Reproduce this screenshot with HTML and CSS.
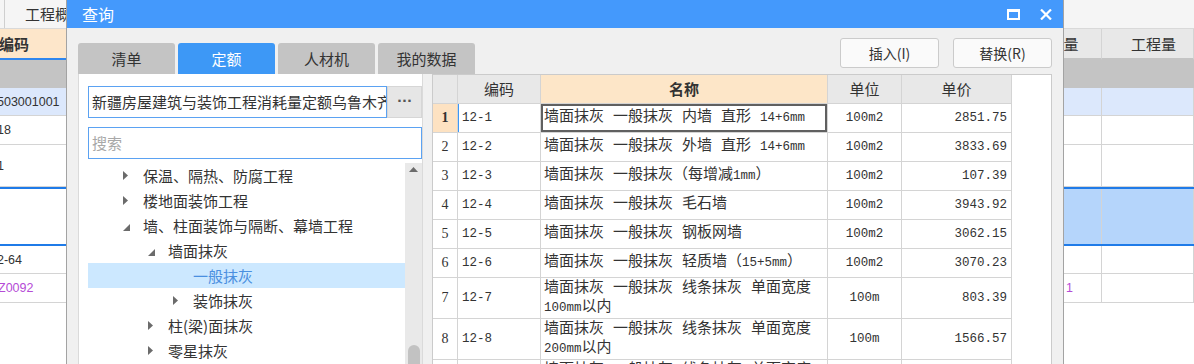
FILE: index.html
```html
<!DOCTYPE html>
<html lang="zh-CN">
<head>
  <meta charset="UTF-8">
  <title>查询</title>
  <link rel="stylesheet" href="styles.css">
</head>
<body>
  <!-- 背景：主界面表格 -->
  <div class="app">
    <div class="app-top"><div class="app-tab">工程概况</div></div>
    <div class="bg-row bg-head">
      <div class="c1 head-code">编码</div><div class="c2"></div><div class="c3">含量</div><div class="c4">工程量</div>
    </div>
    <div class="bg-row bg-gray h28">
      <div class="c1"></div><div class="c2"></div><div class="c3"></div><div class="c4"></div>
    </div>
    <div class="bg-row bg-light h28">
      <div class="c1">503001001</div><div class="c2"></div><div class="c3"></div><div class="c4"></div>
    </div>
    <div class="bg-row h29">
      <div class="c1">18</div><div class="c2"></div><div class="c3"></div><div class="c4"></div>
    </div>
    <div class="bg-row h42">
      <div class="c1">1</div><div class="c2"></div><div class="c3"></div><div class="c4"></div>
    </div>
    <div class="bg-row bg-sel">
      <div class="c1"></div><div class="c2"></div><div class="c3"></div><div class="c4"></div>
    </div>
    <div class="bg-row h28">
      <div class="c1">2-64</div><div class="c2"></div><div class="c3"></div><div class="c4"></div>
    </div>
    <div class="bg-row h29">
      <div class="c1 purple">Z0092</div><div class="c2"></div><div class="c3 purple">1</div><div class="c4"></div>
    </div>
  </div>

  <!-- 查询对话框 -->
  <div class="dialog">
    <div class="dlg-title">
      <span>查询</span>
      <div class="title-btns">
        <svg width="13" height="11" viewBox="0 0 13 11"><rect x="1" y="1.5" width="11" height="8.5" fill="none" stroke="#fff" stroke-width="2"/><rect x="0" y="0" width="13" height="3" fill="#fff"/></svg>
        <svg width="12" height="11" viewBox="0 0 12 11"><path d="M1 0.5 L11 10.5 M11 0.5 L1 10.5" stroke="#fff" stroke-width="2.2"/></svg>
      </div>
    </div>

    <div class="dlg-toolbar">
      <div class="tab">清单</div>
      <div class="tab active">定额</div>
      <div class="tab">人材机</div>
      <div class="tab">我的数据</div>
      <button class="btn first">插入(I)</button>
      <button class="btn">替换(R)</button>
    </div>

    <div class="dlg-body">
      <div class="left-panel">
        <div class="combo">
          <div class="combo-text">新疆房屋建筑与装饰工程消耗量定额乌鲁木齐</div>
          <div class="combo-btn">···</div>
        </div>
        <div class="search">搜索</div>
        <div class="tree">
          <div class="tree-list">
            <div class="node l1"><span class="tw"><svg width="6" height="9"><polygon points="0,0 5,4.5 0,9" fill="#6b6b6b"/></svg></span>保温、隔热、防腐工程</div>
            <div class="node l1"><span class="tw"><svg width="6" height="9"><polygon points="0,0 5,4.5 0,9" fill="#6b6b6b"/></svg></span>楼地面装饰工程</div>
            <div class="node l1"><span class="tw open"><svg width="7" height="7"><polygon points="7,0 7,7 0,7" fill="#6b6b6b"/></svg></span>墙、柱面装饰与隔断、幕墙工程</div>
            <div class="node l2"><span class="tw open"><svg width="7" height="7"><polygon points="7,0 7,7 0,7" fill="#6b6b6b"/></svg></span>墙面抹灰</div>
            <div class="node l3 selected"><span class="tw"></span>一般抹灰</div>
            <div class="node l3"><span class="tw"><svg width="6" height="9"><polygon points="0,0 5,4.5 0,9" fill="#6b6b6b"/></svg></span>装饰抹灰</div>
            <div class="node l2"><span class="tw"><svg width="6" height="9"><polygon points="0,0 5,4.5 0,9" fill="#6b6b6b"/></svg></span>柱(梁)面抹灰</div>
            <div class="node l2"><span class="tw"><svg width="6" height="9"><polygon points="0,0 5,4.5 0,9" fill="#6b6b6b"/></svg></span>零星抹灰</div>
          </div>
          <div class="scrollbar">
            <svg class="sb-up" width="9" height="5"><polygon points="0,5 4.5,0 9,5" fill="#6b6b6b"/></svg>
            <div class="sb-thumb"></div>
          </div>
        </div>
      </div>

      <div class="grid">
        <div class="g-row g-head">
          <div></div><div>编码</div><div class="hl">名称</div><div>单位</div><div>单价</div>
        </div>
        <div class="g-row cur">
          <div class="num">1</div><div class="code">12-1</div><div class="name">墙面抹灰 一般抹灰 内墙 直形 <span class="a">14+6mm</span></div><div class="unit">100m2</div><div class="price">2851.75</div>
        </div>
        <div class="g-row">
          <div class="num">2</div><div class="code">12-2</div><div class="name">墙面抹灰 一般抹灰 外墙 直形 <span class="a">14+6mm</span></div><div class="unit">100m2</div><div class="price">3833.69</div>
        </div>
        <div class="g-row">
          <div class="num">3</div><div class="code">12-3</div><div class="name">墙面抹灰 一般抹灰（每增减<span class="a">1mm</span>）</div><div class="unit">100m2</div><div class="price">107.39</div>
        </div>
        <div class="g-row">
          <div class="num">4</div><div class="code">12-4</div><div class="name">墙面抹灰 一般抹灰 毛石墙</div><div class="unit">100m2</div><div class="price">3943.92</div>
        </div>
        <div class="g-row">
          <div class="num">5</div><div class="code">12-5</div><div class="name">墙面抹灰 一般抹灰 钢板网墙</div><div class="unit">100m2</div><div class="price">3062.15</div>
        </div>
        <div class="g-row">
          <div class="num">6</div><div class="code">12-6</div><div class="name">墙面抹灰 一般抹灰 轻质墙（<span class="a">15+5mm</span>）</div><div class="unit">100m2</div><div class="price">3070.23</div>
        </div>
        <div class="g-row tall">
          <div class="num">7</div><div class="code">12-7</div><div class="name two">墙面抹灰 一般抹灰 线条抹灰 单面宽度<br><span class="a">100mm</span>以内</div><div class="unit">100m</div><div class="price">803.39</div>
        </div>
        <div class="g-row tall">
          <div class="num">8</div><div class="code">12-8</div><div class="name two">墙面抹灰 一般抹灰 线条抹灰 单面宽度<br><span class="a">200mm</span>以内</div><div class="unit">100m</div><div class="price">1566.57</div>
        </div>
        <div class="g-row tall">
          <div class="num">9</div><div class="code">12-9</div><div class="name two">墙面抹灰 一般抹灰 线条抹灰 单面宽度<br><span class="a">300mm</span>以内</div><div class="unit">100m</div><div class="price">2136.40</div>
        </div>
      </div>
    </div>
  </div>
</body>
</html>
```

FILE: styles.css
```css
* {
  box-sizing: border-box;
}
body {
  margin: 0;
  width: 1194px;
  height: 364px;
  overflow: hidden;
  position: relative;
  font-family: "Noto Sans CJK SC", "Liberation Sans", sans-serif;
  font-size: 15px;
  color: #333;
  background: #fff;
}

/* 背景主界面 */
.app-top {
  height: 29px;
  background: #f5f5f5;
  border-bottom: 1px solid #d9d9d9;
  padding-left: 4px;
}
.app-tab {
  height: 28px;
  line-height: 28px;
  border-left: 1px solid #cfcfcf;
  padding-left: 20px;
}
.bg-row {
  display: flex;
}
.bg-row > div {
  border-right: 1px solid #d4d4d4;
  border-bottom: 1px solid #d4d4d4;
  overflow: hidden;
  white-space: nowrap;
  font-family: "Liberation Sans", sans-serif;
  font-size: 12.5px;
  display: flex;
  align-items: center;
}
.c1 { width: 200px; text-indent: -3px; }
.c2 { width: 826px; }
.c3 { width: 76px; }
.c4 { width: 92px; }
.c1.purple { text-indent: -2px; }
.c3.purple { padding-left: 40px; }
.purple { color: #b54bd6; }
.h28 { height: 28px; }
.h29 { height: 29px; }
.h42 { height: 42px; }
.bg-head {
  height: 31px;
}
.bg-head > div {
  background: #e8e8e8;
  border-bottom: 2px solid #c4c4c4;
  font-family: "Noto Sans CJK SC", sans-serif;
  font-size: 15px;
  justify-content: center;
}
.bg-head .head-code {
  background: #fde6ca;
  border-bottom-color: #2f86ee;
  justify-content: flex-start;
  font-weight: bold;
  text-indent: -1px;
}
.bg-head .c4 {
  padding-left: 12px;
}
.bg-gray > div {
  background: #c4c4c4;
  border-color: #c4c4c4;
}
.bg-light > div {
  background: #dce8fc;
}
.bg-sel {
  height: 59px;
  border-top: 2px solid #1f7be8;
  border-bottom: 2px solid #1f7be8;
}
.bg-sel > div {
  background: #b5d5fb;
  border-bottom: none;
}
.bg-sel .c1 {
  background: #fff;
}

/* 对话框 */
.dialog {
  position: absolute;
  left: 66px;
  top: 0;
  width: 998px;
  height: 380px;
  background: #f0f0f0;
  border-left: 1px solid #a3a3a3;
  border-right: 1px solid #a3a3a3;
}
.dlg-title {
  height: 28px;
  background: #4499fc;
  color: #fff;
  font-size: 16px;
  display: flex;
  align-items: center;
  padding: 0 11px 0 15px;
}
.title-btns {
  margin-left: auto;
  display: flex;
  align-items: center;
  gap: 20px;
}
.dlg-toolbar {
  height: 46px;
  display: flex;
  align-items: flex-start;
  padding: 10px 11px 0 11px;
}
.tab {
  width: 97px;
  height: 31px;
  margin-top: 5px;
  margin-right: 3px;
  background: #c4c4c4;
  border-radius: 3px 3px 0 0;
  text-align: center;
  line-height: 31px;
  font-size: 15px;
}
.tab.active {
  background: #3d98f6;
  color: #fff;
}
.btn {
  width: 99px;
  height: 30px;
  background: #fafafa;
  border: 1px solid #cbcbcb;
  border-radius: 3px;
  font-family: "Noto Sans CJK SC", sans-serif;
  font-size: 14px;
  color: #333;
  padding: 0;
  margin-left: 14px;
}
.btn.first {
  margin-left: auto;
}
.dlg-body {
  display: flex;
  gap: 9px;
  padding: 0 11px;
  height: 306px;
}

/* 左侧树 */
.left-panel {
  width: 345px;
  background: #fff;
  border: 1px solid #dadada;
  border-top: none;
  padding: 12px 0 0 9px;
}
.combo {
  display: flex;
  height: 32px;
}
.combo-text {
  width: 299px;
  border: 1px solid #5ba2f2;
  line-height: 30px;
  padding-left: 3px;
  white-space: nowrap;
  overflow: hidden;
}
.combo-btn {
  width: 35px;
  background: #e6e6e6;
  border: 1px solid #d6d6d6;
  text-align: center;
  line-height: 28px;
  font-family: "DejaVu Sans", sans-serif;
  font-size: 13px;
  font-weight: bold;
  color: #555;
}
.search {
  margin-top: 9px;
  height: 32px;
  border: 1px solid #5ba2f2;
  line-height: 30px;
  padding-left: 3px;
  color: #a8a8a8;
}
.tree {
  margin-top: 4px;
  display: flex;
  height: 240px;
}
.tree-list {
  flex: 1;
}
.node {
  height: 25px;
  display: flex;
  align-items: center;
  white-space: nowrap;
}
.node.l1 { padding-left: 35px; }
.node.l2 { padding-left: 60px; }
.node.l3 { padding-left: 85px; }
.node.selected {
  background: #cce8ff;
  color: #4a8fe0;
}
.tw {
  width: 20px;
  display: flex;
  align-items: center;
}
.tw.open {
  padding-top: 3px;
}
.scrollbar {
  width: 17px;
  background: #e9e9e9;
  display: flex;
  flex-direction: column;
  align-items: center;
}
.sb-up {
  margin-top: 4px;
}
.sb-thumb {
  width: 12px;
  height: 40px;
  margin-top: 173px;
  background: #c2c2c2;
  border-radius: 6px;
}

/* 右侧定额表 */
.grid {
  width: 620px;
  background: #fff;
  border: 1px solid #cbcbcb;
  overflow: hidden;
}
.g-row {
  display: grid;
  grid-template-columns: 25px 83px 287px 74px 110px;
  height: 29px;
}
.g-row > div {
  border-right: 1px solid #d4d4d4;
  border-bottom: 1px solid #d4d4d4;
  line-height: 28px;
  white-space: nowrap;
  overflow: hidden;
}
.g-row.tall {
  height: 41px;
}
.g-row.tall > div {
  line-height: 40px;
}
.g-head > div {
  background: #e8e8e8;
  text-align: center;
  font-size: 15px;
}
.g-head .hl {
  background: #fde6c8;
  font-weight: bold;
}
.num {
  text-align: center;
  font-family: "Liberation Serif", serif;
  font-size: 14px;
}
.cur .num {
  background: #fde2c2;
  font-weight: bold;
}
.code {
  padding-left: 4px;
  font-family: "Liberation Mono", monospace;
  font-size: 12.5px;
}
.cur .code {
  box-shadow: inset 1px 0 0 #3d98f6;
}
.name {
  padding-left: 3px;
  font-family: "Liberation Mono", "Noto Sans CJK SC", monospace;
  font-size: 15px;
}
.cur .name {
  box-shadow: inset 0 0 0 2px #606060;
}
.g-row.tall .name.two {
  white-space: normal;
  line-height: 19px;
  padding-top: 1px;
}
.a {
  font-size: 12.5px;
}
.unit {
  text-align: center;
  font-family: "Liberation Mono", monospace;
  font-size: 12.5px;
}
.price {
  text-align: right;
  padding-right: 4px;
  font-family: "Liberation Mono", monospace;
  font-size: 12.5px;
}
```
